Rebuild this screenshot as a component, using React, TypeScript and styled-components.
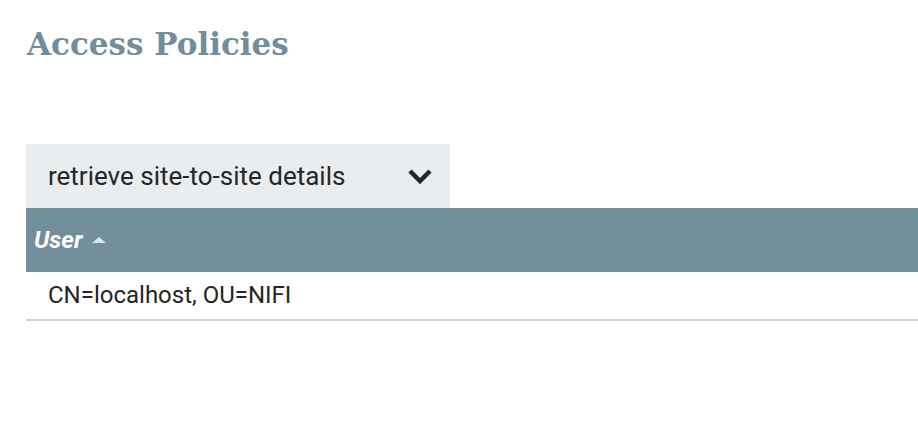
import React from "react";
import styled, { createGlobalStyle } from "styled-components";

const Global = createGlobalStyle`
  html, body { margin: 0; padding: 0; background: #ffffff; }
  body { font-family: Roboto, "Liberation Sans", sans-serif; overflow: hidden; }
`;

const Page = styled.div`
  width: 918px;
  height: 432px;
  padding: 22px 0 0 26px;
  box-sizing: border-box;
  display: flex;
  flex-direction: column;
`;

const Title = styled.h1`
  margin: 0;
  font-family: "DejaVu Serif", "Liberation Serif", serif;
  font-weight: bold;
  font-size: 31px;
  line-height: 44px;
  color: #728e9b;
  padding-left: 1px;
`;

const Select = styled.div`
  margin-top: 78px;
  width: 424px;
  height: 64px;
  background: #e9edf0;
  display: flex;
  align-items: center;
  justify-content: space-between;
  padding: 0 17px 0 22px;
  box-sizing: border-box;
  font-size: 26px;
  color: #262626;
`;

const Table = styled.div`
  display: flex;
  flex-direction: column;
  width: 100%;
`;

const HeaderRow = styled.div`
  height: 64px;
  background: #728e9b;
  display: flex;
  align-items: center;
  padding-left: 8px;
  gap: 10px;
  color: #ffffff;
  font-size: 24px;
  font-weight: bold;
  font-style: italic;
`;

const Row = styled.div`
  height: 49px;
  border-bottom: 2px solid #c9d4d8;
  display: flex;
  align-items: center;
  padding-left: 22px;
  padding-bottom: 2px;
  box-sizing: border-box;
  font-size: 24px;
  color: #262626;
`;

export default function App() {
  return (
    <>
      <Global />
      <Page>
        <Title>Access Policies</Title>
        <Select>
          <span>retrieve site-to-site details</span>
          <svg width="26" height="18" viewBox="0 0 26 18">
            <polyline points="3,4 13,14 23,4" fill="none" stroke="#262626" strokeWidth="4.5" strokeLinejoin="miter" strokeLinecap="butt" />
          </svg>
        </Select>
        <Table>
          <HeaderRow>
            <span>User</span>
            <svg width="14" height="8" viewBox="0 0 14 8">
              <polygon points="0,7 7,1 14,7" fill="#d9e3e8" />
            </svg>
          </HeaderRow>
          <Row>CN=localhost, OU=NIFI</Row>
        </Table>
      </Page>
    </>
  );
}
